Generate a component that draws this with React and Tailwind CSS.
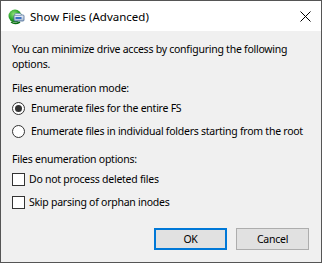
import React from "react";

function AppIcon() {
  return (
    <svg width="17" height="17" viewBox="0 0 17 17">
      <defs>
        <radialGradient id="g" cx="0.4" cy="0.35" r="0.7">
          <stop offset="0" stopColor="#8fe07a" />
          <stop offset="0.6" stopColor="#2aa52a" />
          <stop offset="1" stopColor="#0b6e14" />
        </radialGradient>
        <linearGradient id="d" x1="0" y1="0" x2="0" y2="1">
          <stop offset="0" stopColor="#f4f8ff" />
          <stop offset="1" stopColor="#9fb3cc" />
        </linearGradient>
      </defs>
      <circle cx="7" cy="8" r="6.5" fill="url(#g)" />
      <path d="M3 14 Q7 17 12 14" stroke="#0b6e14" strokeWidth="1.5" fill="none" />
      <rect x="6" y="7" width="10" height="6" rx="1" fill="url(#d)" stroke="#4a6a96" strokeWidth="0.8" />
      <rect x="7.5" y="9" width="6" height="2" fill="#3b6fc2" />
      <rect x="7" y="5.5" width="6" height="2" rx="0.5" fill="#dfe9f7" stroke="#6c86aa" strokeWidth="0.6" />
    </svg>
  );
}

function Radio({ checked, label }) {
  return (
    <div className="flex items-center h-[23px]">
      <div className="shrink-0 w-[13px] h-[13px] rounded-full border border-[#333] bg-white flex items-center justify-center">
        {checked && <div className="w-[7px] h-[7px] rounded-full bg-[#333]" />}
      </div>
      <span className="ml-[6px] whitespace-nowrap">{label}</span>
    </div>
  );
}

function Check({ label }) {
  return (
    <div className="flex items-center h-[23px]">
      <div className="shrink-0 w-[13px] h-[13px] border border-[#333] bg-white" />
      <span className="ml-[4px] whitespace-nowrap">{label}</span>
    </div>
  );
}

export default function App() {
  return (
    <div
      className="w-[322px] h-[263px] border border-[#555] flex flex-col text-[10.5px] tracking-[-0.25px] leading-[15px] text-black"
      style={{ fontFamily: '"Noto Sans", sans-serif' }}
    >
      <div className="h-[30px] bg-white flex items-center">
        <div className="ml-[7px] mt-[1px]">
          <AppIcon />
        </div>
        <span className="ml-[5px] text-[11.5px] tracking-normal">Show Files (Advanced)</span>
        <div className="ml-auto mr-[10px]">
          <svg width="11" height="11" viewBox="0 0 11 11">
            <path d="M0.5 0.5 L10.5 10.5 M10.5 0.5 L0.5 10.5" stroke="#000" strokeWidth="1" />
          </svg>
        </div>
      </div>
      <div className="flex-1 bg-[#f0f0f0] pl-[11px] pr-[12px] pt-[11px] flex flex-col">
        <p>You can minimize drive access by configuring the following options.</p>
        <p className="mt-[9px]">Files enumeration mode:</p>
        <div className="mt-[1px]">
          <Radio checked label="Enumerate files for the entire FS" />
          <Radio label="Enumerate files in individual folders starting from the root" />
        </div>
        <p className="mt-[9px]">Files enumeration options:</p>
        <div className="mt-[1px]">
          <Check label="Do not process deleted files" />
          <Check label="Skip parsing of orphan inodes" />
        </div>
        <div className="mt-[14px] flex justify-end gap-[9px]">
          <button className="w-[73px] h-[22px] bg-[#e1e1e1] border-2 border-[#0078d7] flex items-center justify-center">
            OK
          </button>
          <button className="w-[73px] h-[22px] bg-[#e1e1e1] border border-[#adadad] flex items-center justify-center">
            Cancel
          </button>
        </div>
      </div>
    </div>
  );
}
